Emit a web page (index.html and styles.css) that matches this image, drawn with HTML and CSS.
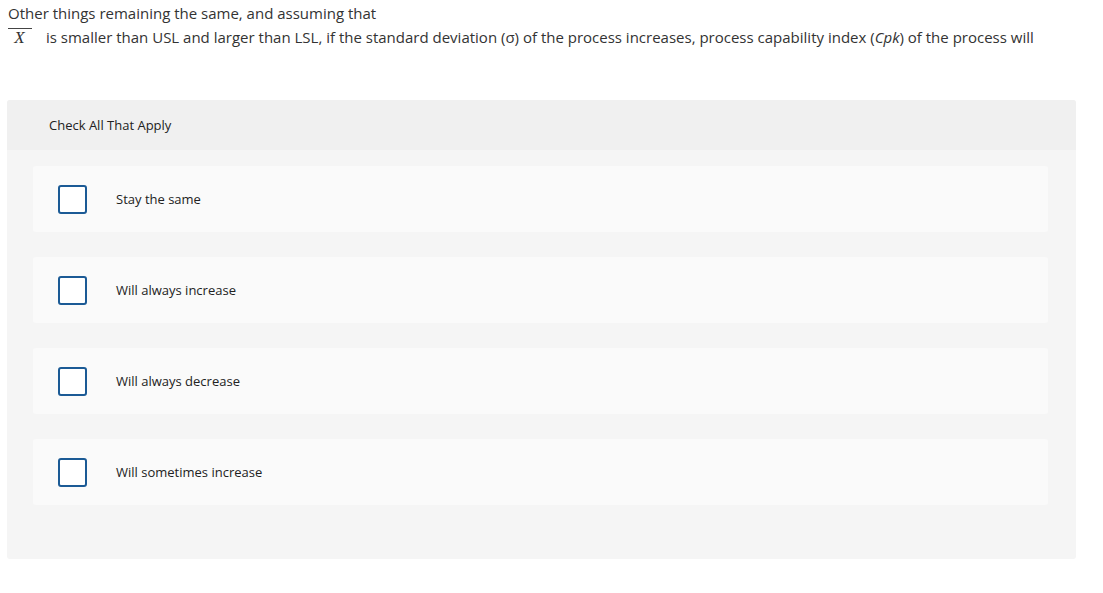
FILE: index.html
```html
<!DOCTYPE html>
<html>
<head>
<meta charset="utf-8">
<link rel="stylesheet" href="styles.css">
</head>
<body>
<div class="question">
  <p class="q-line">Other things remaining the same, and assuming that</p>
  <p class="q-line q-line2"><span class="xbar">X</span><span class="q-rest">is smaller than USL and larger than LSL, if the standard deviation (σ) of the process increases, process capability index (<i>Cpk</i>) of the process will</span></p>
</div>
<div class="panel">
  <div class="panel-head">Check All That Apply</div>
  <div class="panel-body">
    <div class="option"><span class="box"></span><span class="label">Stay the same</span></div>
    <div class="option"><span class="box"></span><span class="label">Will always increase</span></div>
    <div class="option"><span class="box"></span><span class="label">Will always decrease</span></div>
    <div class="option"><span class="box"></span><span class="label">Will sometimes increase</span></div>
  </div>
</div>
</body>
</html>
```
FILE: styles.css
```css
body {
  margin: 0;
  font-family: "Open Sans", "Liberation Sans", sans-serif;
  color: #333;
  background: #fff;
}
.question {
  padding: 3px 0 0 8px;
}
.q-line {
  margin: 0;
  font-size: 15px;
  line-height: 20px;
  color: #333;
}
.q-line2 {
  margin-top: 4px;
  display: flex;
  align-items: center;
}
.xbar {
  font-family: "Liberation Serif", serif;
  font-style: italic;
  font-size: 17px;
  border-top: 1.5px solid #444;
  padding: 1px 6px 0 5px;
  margin: 0 14px 0 0;
  line-height: 16px;
  width: 13px;
  text-align: center;
}
.panel {
  margin: 53px 27px 0 7px;
  border-radius: 3px;
  overflow: hidden;
  background: #f5f5f5;
}
.panel-head {
  height: 50px;
  background: #f0f0f0;
  display: flex;
  align-items: center;
  padding-left: 42px;
  font-size: 13px;
  color: #222;
}
.panel-body {
  padding: 16px 28px 54px 26px;
  display: flex;
  flex-direction: column;
  gap: 25px;
}
.option {
  height: 66px;
  background: #fafafa;
  border-radius: 3px;
  display: flex;
  align-items: center;
  padding-left: 25px;
}
.box {
  width: 25px;
  height: 25px;
  border: 2px solid #1b5a95;
  border-radius: 3px;
  background: #fff;
  flex: none;
}
.label {
  margin-left: 29px;
  font-size: 13px;
  color: #222;
}
```
